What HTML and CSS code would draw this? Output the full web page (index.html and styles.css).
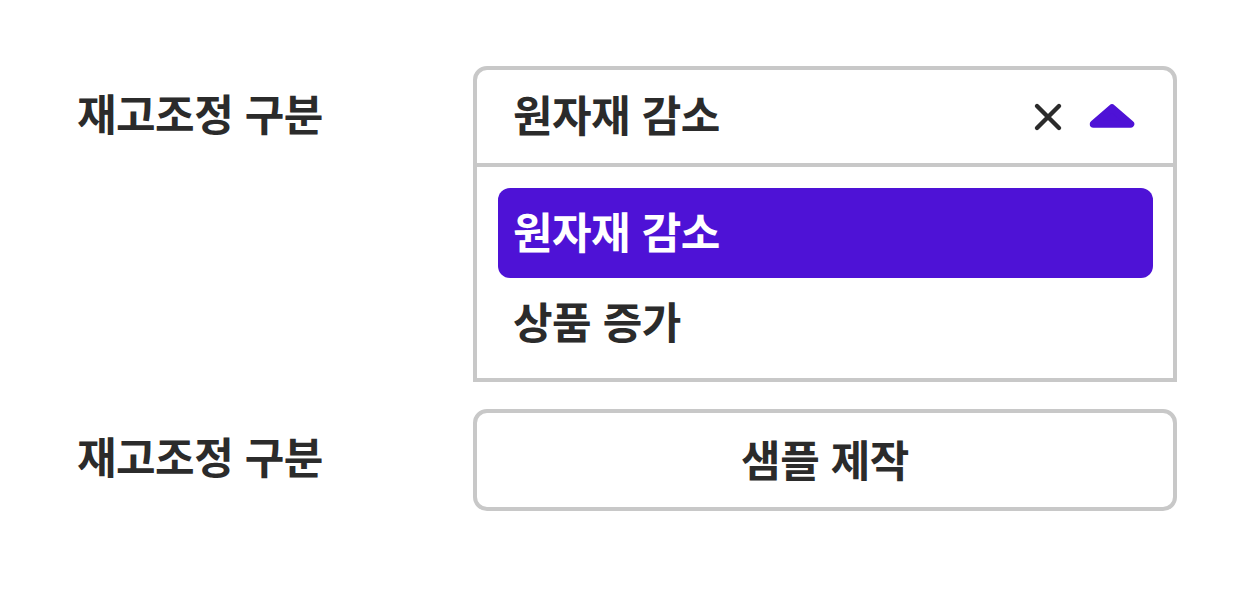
FILE: index.html
```html
<!DOCTYPE html>
<html lang="ko">
<head>
    <meta charset="UTF-8">
    <title>재고조정</title>
    <link rel="stylesheet" href="styles.css">
</head>
<body>
    <div class="form">
        <div class="row">
            <div class="label">재고조정 구분</div>
            <div class="select open">
                <div class="select-head">
                    <span class="select-value">원자재 감소</span>
                    <span class="select-icons">
                        <svg class="clear-icon" width="30" height="30" viewBox="0 0 30 30">
                            <path d="M4 4 L26 26 M26 4 L4 26" stroke="#2b2b2b" stroke-width="4.4" stroke-linecap="round" fill="none"/>
                        </svg>
                        <svg class="caret-icon" width="46" height="25" viewBox="0 0 46 25">
                            <polygon points="4.5,20 23,4 41.5,20" fill="#4e12d6" stroke="#4e12d6" stroke-width="7.5" stroke-linejoin="round"/>
                        </svg>
                    </span>
                </div>
                <ul class="options">
                    <li class="option selected">원자재 감소</li>
                    <li class="option">상품 증가</li>
                </ul>
            </div>
        </div>

        <div class="row">
            <div class="label">재고조정 구분</div>
            <div class="select-button">샘플 제작</div>
        </div>
    </div>
</body>
</html>
```

FILE: styles.css
```css
:root {
    --text: #2b2b2b;
    --border: #c8c8c8;
    --primary: #4e12d6;
}

* {
    margin: 0;
    padding: 0;
    box-sizing: border-box;
}

body {
    background: #ffffff;
    color: var(--text);
    font-family: "Noto Sans CJK KR", "Noto Sans", sans-serif;
    font-weight: 700;
    font-size: 43px;
    line-height: 1;
    letter-spacing: -0.5px;
}

.form {
    padding: 66px 72px 0 77px;
    display: flex;
    flex-direction: column;
    gap: 27px;
}

.row {
    display: grid;
    grid-template-columns: 396px 704px;
    align-items: start;
}

.label {
    height: 99px;
    display: flex;
    align-items: center;
    padding-bottom: 7px;
}

.select {
    border: 4px solid var(--border);
    border-radius: 14px 14px 0 0;
}

.select-head {
    height: 97px;
    display: flex;
    align-items: center;
    justify-content: space-between;
    padding: 0 38px 0 36px;
    border-bottom: 4px solid var(--border);
}

.select-value {
    margin-bottom: 6px;
}

.select-icons {
    display: flex;
    align-items: center;
    gap: 26px;
}

.clear-icon,
.caret-icon {
    display: block;
}

.options {
    list-style: none;
    padding: 21px 20px 10px 21px;
}

.option {
    height: 90px;
    display: flex;
    align-items: center;
    padding: 0 0 6px 15px;
    border-radius: 12px;
}

.option.selected {
    background: var(--primary);
    color: #ffffff;
}

.select-button {
    height: 102px;
    border: 4px solid var(--border);
    border-radius: 14px;
    display: flex;
    align-items: center;
    justify-content: center;
    padding-bottom: 4px;
}
```
